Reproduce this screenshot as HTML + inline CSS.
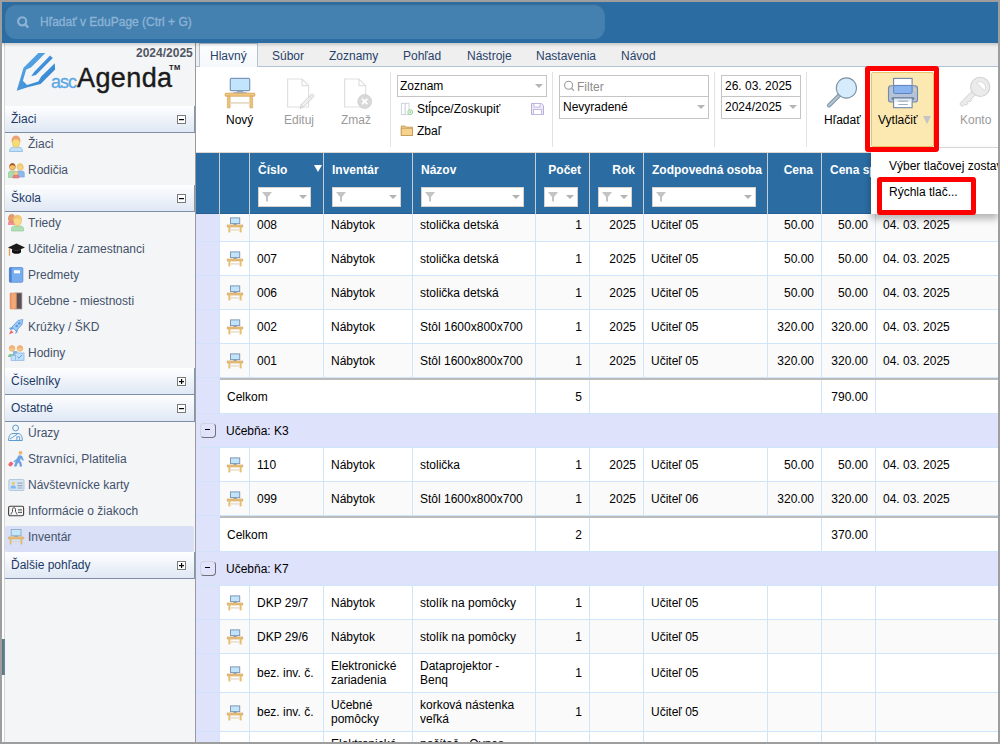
<!DOCTYPE html>
<html><head><meta charset="utf-8">
<style>
*{box-sizing:border-box;margin:0;padding:0}
html,body{width:1000px;height:744px;overflow:hidden;background:#fff}
body{position:relative;font-family:"Liberation Sans",sans-serif;font-size:12px;color:#000}
.a{position:absolute}
.t{position:absolute;white-space:nowrap;line-height:14px}
/* frame */
.fr{position:absolute;background:#9e9e9e;z-index:100}
/* topbar */
#top{left:2px;top:2px;width:996px;height:41px;background:#2b6ca2}
#search{left:5px;top:4px;width:600px;height:35px;border-radius:11px;background:#4480b0;box-shadow:inset 0 1px 1px rgba(0,0,0,.18)}
#topsh{left:2px;top:43px;width:996px;height:4px;background:linear-gradient(rgba(0,0,0,.16),rgba(0,0,0,0));z-index:5}
/* sidebar */
#sb{left:2px;top:43px;width:194px;height:699px;background:#f4f5f7;border-left:2px solid #fff}
#sbl{left:4px;top:43px;width:1px;height:699px;background:#d6d6d6}
#sbr{left:195px;top:43px;width:1px;height:699px;background:#9a9a9a}
.sh{position:absolute;left:5px;width:190px;height:27px;background:linear-gradient(#fefeff,#dfe8f4);border-bottom:1px solid #7d8ea6;border-right:1px solid #8596ad}
.sh span{position:absolute;left:6px;top:6px;line-height:14px;color:#1d3a66;font-size:12px}
.sh i{position:absolute;left:172px;top:9px;width:9px;height:9px;border:1px solid #7a7a7a;background:#fff}
.sh i:before{content:"";position:absolute;left:1px;top:3px;width:5px;height:1px;background:#000;box-shadow:0 .3px 0 #555}
.sh i.p:after{content:"";position:absolute;left:3px;top:1px;width:1px;height:5px;background:#000;box-shadow:.3px 0 0 #555}
.si{position:absolute;left:5px;width:189px;height:26px}
.si span{position:absolute;left:23px;top:4px;line-height:14px;color:#44526b}
.si svg{position:absolute;left:4px;top:4px}
.grpbtn{width:16px;height:15px;border:1px solid #d2d3e2;border-right-color:#707078;border-bottom-color:#707078;border-radius:4px;background:#e0e3fb}
.grpbtn:before{content:"";position:absolute;left:4px;top:5px;width:5px;height:1px;background:#000}
</style></head><body>

<!-- topbar -->
<div id="top" class="a"></div>
<div id="search" class="a"></div>
<div id="topsh" class="a"></div>

<!-- sidebar -->
<div id="sb" class="a"></div>
<div id="sbl" class="a"></div>
<div id="sbr" class="a"></div>
<div class="a" style="left:2px;top:639px;width:3px;height:36px;background:linear-gradient(90deg,#557480,#6a8a97)"></div>


<!-- search content -->
<svg class="a" style="left:16px;top:16px" width="14" height="14" viewBox="0 0 14 14"><circle cx="6.2" cy="5.3" r="4.1" fill="none" stroke="#8db3d4" stroke-width="2.1"/><path d="M9.2 8.4L11.6 10.9" stroke="#8db3d4" stroke-width="2.4" stroke-linecap="round"/></svg>
<div class="t" style="left:40px;top:15px;color:#8cb3d5;-webkit-text-stroke:0.35px #8cb3d5">Hľadať v EduPage (Ctrl + G)</div>

<!-- logo -->
<div class="t" style="left:136px;top:46px;font-weight:bold;color:#505663">2024/2025</div>
<svg class="a" style="left:14px;top:50px" width="44" height="44" viewBox="0 0 44 44">
 <defs><linearGradient id="lg1" x1="0" y1="0" x2="1" y2="1"><stop offset="0" stop-color="#63b2ea"/><stop offset="1" stop-color="#2a7acb"/></linearGradient></defs>
 <path d="M2.7 40.8 L9.5 17.8 L24.3 3 L31.4 3 L17.2 17.2 L12.1 19.8 L8.9 30.8 L13 34.9 L24.3 31.4 L27.2 26.6 L40.8 13.3 L41.1 19.5 L26.6 34 L13.6 37.2 Z" fill="url(#lg1)"/>
 <path d="M17.2 26.3 L20.1 21.9 L36.1 5.6 L38.8 8 L21.9 24.9 Z" fill="#3f8fdc"/>
</svg>
<div class="t" style="left:51px;top:73px;font-size:18px;line-height:18px;letter-spacing:-1px;color:#5aa7e3;-webkit-text-stroke:0.3px #5aa7e3">asc</div>
<div class="t" style="left:77px;top:63px;font-size:27px;line-height:30px;letter-spacing:0.4px;color:#1b1b1b;-webkit-text-stroke:0.4px #1b1b1b">Agenda</div>
<div class="t" style="left:169px;top:64px;font-size:7.5px;line-height:7px;font-weight:bold;color:#1b1b1b;letter-spacing:0.3px">TM</div>

<!-- sidebar sections -->
<div class="sh" style="top:106px"><span>Žiaci</span><i></i></div>
<div class="si" style="top:133px"><span>Žiaci</span></div>
<div class="si" style="top:159px"><span>Rodičia</span></div>
<div class="sh" style="top:185px"><span>Škola</span><i></i></div>
<div class="si" style="top:212px"><span>Triedy</span></div>
<div class="si" style="top:238px"><span>Učitelia / zamestnanci</span></div>
<div class="si" style="top:264px"><span>Predmety</span></div>
<div class="si" style="top:290px"><span>Učebne - miestnosti</span></div>
<div class="si" style="top:316px"><span>Krúžky / ŠKD</span></div>
<div class="si" style="top:342px"><span>Hodiny</span></div>
<div class="sh" style="top:368px"><span>Číselníky</span><i class="p"></i></div>
<div class="sh" style="top:395px"><span>Ostatné</span><i></i></div>
<div class="si" style="top:422px"><span>Úrazy</span></div>
<div class="si" style="top:448px"><span>Stravníci, Platitelia</span></div>
<div class="si" style="top:474px"><span>Návštevnícke karty</span></div>
<div class="si" style="top:500px"><span>Informácie o žiakoch</span></div>
<div class="si" style="top:526px;background:#d8dff6;border-radius:2px"><span>Inventár</span></div>
<div class="sh" style="top:552px"><span>Ďalšie pohľady</span><i class="p"></i></div>

<!-- main -->
<div class="a" style="left:196px;top:208px;width:23px;height:34px;background:#dfe2fb;border-bottom:1px solid #d3e1fb"></div>
<div class="a" style="left:219px;top:208px;width:779px;height:34px;background:#fafafa;border-bottom:1px solid #cfe6fa"></div>
<div class="a" style="left:219px;top:208px;width:1px;height:33px;background:#cfe6fa"></div>
<div class="a" style="left:249px;top:208px;width:1px;height:33px;background:#cfe6fa"></div>
<div class="a" style="left:323px;top:208px;width:1px;height:33px;background:#cfe6fa"></div>
<div class="a" style="left:412px;top:208px;width:1px;height:33px;background:#cfe6fa"></div>
<div class="a" style="left:535px;top:208px;width:1px;height:33px;background:#cfe6fa"></div>
<div class="a" style="left:589px;top:208px;width:1px;height:33px;background:#cfe6fa"></div>
<div class="a" style="left:643px;top:208px;width:1px;height:33px;background:#cfe6fa"></div>
<div class="a" style="left:767px;top:208px;width:1px;height:33px;background:#cfe6fa"></div>
<div class="a" style="left:821px;top:208px;width:1px;height:33px;background:#cfe6fa"></div>
<div class="a" style="left:875px;top:208px;width:1px;height:33px;background:#cfe6fa"></div>
<svg class="a ic" viewBox="0 0 18 16" style="left:226px;top:217px" width="18" height="16"><rect x="4.5" y="0.9" width="9.2" height="5.7" fill="#c2e4fb" stroke="#8098b6" stroke-width="1"/><rect x="7.5" y="6.6" width="3.2" height="1.3" fill="#8098b6"/><rect x="1.2" y="8" width="15.6" height="2" fill="#ecc47c" stroke="#cfa25c" stroke-width=".6"/><rect x="2.4" y="10" width="2" height="5.4" fill="#e8bd6c"/><rect x="13.6" y="10" width="2" height="5.4" fill="#e8bd6c"/><rect x="4.4" y="12" width="9.2" height="1.7" fill="#e9e1d2"/></svg>
<div class="t" style="left:257px;top:217.5px">008</div>
<div class="t" style="left:331px;top:217.5px">Nábytok</div>
<div class="t" style="left:420px;top:217.5px">stolička detská</div>
<div class="t" style="right:418px;top:217.5px;text-align:right">1</div>
<div class="t" style="right:364px;top:217.5px;text-align:right">2025</div>
<div class="t" style="left:651px;top:217.5px">Učiteľ 05</div>
<div class="t" style="right:186px;top:217.5px;text-align:right">50.00</div>
<div class="t" style="right:132px;top:217.5px;text-align:right">50.00</div>
<div class="t" style="left:883px;top:217.5px">04. 03. 2025</div>
<div class="a" style="left:196px;top:242px;width:23px;height:34px;background:#dfe2fb;border-bottom:1px solid #d3e1fb"></div>
<div class="a" style="left:219px;top:242px;width:779px;height:34px;background:#fff;border-bottom:1px solid #cfe6fa"></div>
<div class="a" style="left:219px;top:242px;width:1px;height:33px;background:#cfe6fa"></div>
<div class="a" style="left:249px;top:242px;width:1px;height:33px;background:#cfe6fa"></div>
<div class="a" style="left:323px;top:242px;width:1px;height:33px;background:#cfe6fa"></div>
<div class="a" style="left:412px;top:242px;width:1px;height:33px;background:#cfe6fa"></div>
<div class="a" style="left:535px;top:242px;width:1px;height:33px;background:#cfe6fa"></div>
<div class="a" style="left:589px;top:242px;width:1px;height:33px;background:#cfe6fa"></div>
<div class="a" style="left:643px;top:242px;width:1px;height:33px;background:#cfe6fa"></div>
<div class="a" style="left:767px;top:242px;width:1px;height:33px;background:#cfe6fa"></div>
<div class="a" style="left:821px;top:242px;width:1px;height:33px;background:#cfe6fa"></div>
<div class="a" style="left:875px;top:242px;width:1px;height:33px;background:#cfe6fa"></div>
<svg class="a ic" viewBox="0 0 18 16" style="left:226px;top:251px" width="18" height="16"><rect x="4.5" y="0.9" width="9.2" height="5.7" fill="#c2e4fb" stroke="#8098b6" stroke-width="1"/><rect x="7.5" y="6.6" width="3.2" height="1.3" fill="#8098b6"/><rect x="1.2" y="8" width="15.6" height="2" fill="#ecc47c" stroke="#cfa25c" stroke-width=".6"/><rect x="2.4" y="10" width="2" height="5.4" fill="#e8bd6c"/><rect x="13.6" y="10" width="2" height="5.4" fill="#e8bd6c"/><rect x="4.4" y="12" width="9.2" height="1.7" fill="#e9e1d2"/></svg>
<div class="t" style="left:257px;top:251.5px">007</div>
<div class="t" style="left:331px;top:251.5px">Nábytok</div>
<div class="t" style="left:420px;top:251.5px">stolička detská</div>
<div class="t" style="right:418px;top:251.5px;text-align:right">1</div>
<div class="t" style="right:364px;top:251.5px;text-align:right">2025</div>
<div class="t" style="left:651px;top:251.5px">Učiteľ 05</div>
<div class="t" style="right:186px;top:251.5px;text-align:right">50.00</div>
<div class="t" style="right:132px;top:251.5px;text-align:right">50.00</div>
<div class="t" style="left:883px;top:251.5px">04. 03. 2025</div>
<div class="a" style="left:196px;top:276px;width:23px;height:34px;background:#dfe2fb;border-bottom:1px solid #d3e1fb"></div>
<div class="a" style="left:219px;top:276px;width:779px;height:34px;background:#fafafa;border-bottom:1px solid #cfe6fa"></div>
<div class="a" style="left:219px;top:276px;width:1px;height:33px;background:#cfe6fa"></div>
<div class="a" style="left:249px;top:276px;width:1px;height:33px;background:#cfe6fa"></div>
<div class="a" style="left:323px;top:276px;width:1px;height:33px;background:#cfe6fa"></div>
<div class="a" style="left:412px;top:276px;width:1px;height:33px;background:#cfe6fa"></div>
<div class="a" style="left:535px;top:276px;width:1px;height:33px;background:#cfe6fa"></div>
<div class="a" style="left:589px;top:276px;width:1px;height:33px;background:#cfe6fa"></div>
<div class="a" style="left:643px;top:276px;width:1px;height:33px;background:#cfe6fa"></div>
<div class="a" style="left:767px;top:276px;width:1px;height:33px;background:#cfe6fa"></div>
<div class="a" style="left:821px;top:276px;width:1px;height:33px;background:#cfe6fa"></div>
<div class="a" style="left:875px;top:276px;width:1px;height:33px;background:#cfe6fa"></div>
<svg class="a ic" viewBox="0 0 18 16" style="left:226px;top:285px" width="18" height="16"><rect x="4.5" y="0.9" width="9.2" height="5.7" fill="#c2e4fb" stroke="#8098b6" stroke-width="1"/><rect x="7.5" y="6.6" width="3.2" height="1.3" fill="#8098b6"/><rect x="1.2" y="8" width="15.6" height="2" fill="#ecc47c" stroke="#cfa25c" stroke-width=".6"/><rect x="2.4" y="10" width="2" height="5.4" fill="#e8bd6c"/><rect x="13.6" y="10" width="2" height="5.4" fill="#e8bd6c"/><rect x="4.4" y="12" width="9.2" height="1.7" fill="#e9e1d2"/></svg>
<div class="t" style="left:257px;top:285.5px">006</div>
<div class="t" style="left:331px;top:285.5px">Nábytok</div>
<div class="t" style="left:420px;top:285.5px">stolička detská</div>
<div class="t" style="right:418px;top:285.5px;text-align:right">1</div>
<div class="t" style="right:364px;top:285.5px;text-align:right">2025</div>
<div class="t" style="left:651px;top:285.5px">Učiteľ 05</div>
<div class="t" style="right:186px;top:285.5px;text-align:right">50.00</div>
<div class="t" style="right:132px;top:285.5px;text-align:right">50.00</div>
<div class="t" style="left:883px;top:285.5px">04. 03. 2025</div>
<div class="a" style="left:196px;top:310px;width:23px;height:34px;background:#dfe2fb;border-bottom:1px solid #d3e1fb"></div>
<div class="a" style="left:219px;top:310px;width:779px;height:34px;background:#fff;border-bottom:1px solid #cfe6fa"></div>
<div class="a" style="left:219px;top:310px;width:1px;height:33px;background:#cfe6fa"></div>
<div class="a" style="left:249px;top:310px;width:1px;height:33px;background:#cfe6fa"></div>
<div class="a" style="left:323px;top:310px;width:1px;height:33px;background:#cfe6fa"></div>
<div class="a" style="left:412px;top:310px;width:1px;height:33px;background:#cfe6fa"></div>
<div class="a" style="left:535px;top:310px;width:1px;height:33px;background:#cfe6fa"></div>
<div class="a" style="left:589px;top:310px;width:1px;height:33px;background:#cfe6fa"></div>
<div class="a" style="left:643px;top:310px;width:1px;height:33px;background:#cfe6fa"></div>
<div class="a" style="left:767px;top:310px;width:1px;height:33px;background:#cfe6fa"></div>
<div class="a" style="left:821px;top:310px;width:1px;height:33px;background:#cfe6fa"></div>
<div class="a" style="left:875px;top:310px;width:1px;height:33px;background:#cfe6fa"></div>
<svg class="a ic" viewBox="0 0 18 16" style="left:226px;top:319px" width="18" height="16"><rect x="4.5" y="0.9" width="9.2" height="5.7" fill="#c2e4fb" stroke="#8098b6" stroke-width="1"/><rect x="7.5" y="6.6" width="3.2" height="1.3" fill="#8098b6"/><rect x="1.2" y="8" width="15.6" height="2" fill="#ecc47c" stroke="#cfa25c" stroke-width=".6"/><rect x="2.4" y="10" width="2" height="5.4" fill="#e8bd6c"/><rect x="13.6" y="10" width="2" height="5.4" fill="#e8bd6c"/><rect x="4.4" y="12" width="9.2" height="1.7" fill="#e9e1d2"/></svg>
<div class="t" style="left:257px;top:319.5px">002</div>
<div class="t" style="left:331px;top:319.5px">Nábytok</div>
<div class="t" style="left:420px;top:319.5px">Stôl 1600x800x700</div>
<div class="t" style="right:418px;top:319.5px;text-align:right">1</div>
<div class="t" style="right:364px;top:319.5px;text-align:right">2025</div>
<div class="t" style="left:651px;top:319.5px">Učiteľ 05</div>
<div class="t" style="right:186px;top:319.5px;text-align:right">320.00</div>
<div class="t" style="right:132px;top:319.5px;text-align:right">320.00</div>
<div class="t" style="left:883px;top:319.5px">04. 03. 2025</div>
<div class="a" style="left:196px;top:344px;width:23px;height:34px;background:#dfe2fb;border-bottom:1px solid #d3e1fb"></div>
<div class="a" style="left:219px;top:344px;width:779px;height:34px;background:#fafafa;border-bottom:1px solid #cfe6fa"></div>
<div class="a" style="left:219px;top:344px;width:1px;height:33px;background:#cfe6fa"></div>
<div class="a" style="left:249px;top:344px;width:1px;height:33px;background:#cfe6fa"></div>
<div class="a" style="left:323px;top:344px;width:1px;height:33px;background:#cfe6fa"></div>
<div class="a" style="left:412px;top:344px;width:1px;height:33px;background:#cfe6fa"></div>
<div class="a" style="left:535px;top:344px;width:1px;height:33px;background:#cfe6fa"></div>
<div class="a" style="left:589px;top:344px;width:1px;height:33px;background:#cfe6fa"></div>
<div class="a" style="left:643px;top:344px;width:1px;height:33px;background:#cfe6fa"></div>
<div class="a" style="left:767px;top:344px;width:1px;height:33px;background:#cfe6fa"></div>
<div class="a" style="left:821px;top:344px;width:1px;height:33px;background:#cfe6fa"></div>
<div class="a" style="left:875px;top:344px;width:1px;height:33px;background:#cfe6fa"></div>
<svg class="a ic" viewBox="0 0 18 16" style="left:226px;top:353px" width="18" height="16"><rect x="4.5" y="0.9" width="9.2" height="5.7" fill="#c2e4fb" stroke="#8098b6" stroke-width="1"/><rect x="7.5" y="6.6" width="3.2" height="1.3" fill="#8098b6"/><rect x="1.2" y="8" width="15.6" height="2" fill="#ecc47c" stroke="#cfa25c" stroke-width=".6"/><rect x="2.4" y="10" width="2" height="5.4" fill="#e8bd6c"/><rect x="13.6" y="10" width="2" height="5.4" fill="#e8bd6c"/><rect x="4.4" y="12" width="9.2" height="1.7" fill="#e9e1d2"/></svg>
<div class="t" style="left:257px;top:353.5px">001</div>
<div class="t" style="left:331px;top:353.5px">Nábytok</div>
<div class="t" style="left:420px;top:353.5px">Stôl 1600x800x700</div>
<div class="t" style="right:418px;top:353.5px;text-align:right">1</div>
<div class="t" style="right:364px;top:353.5px;text-align:right">2025</div>
<div class="t" style="left:651px;top:353.5px">Učiteľ 05</div>
<div class="t" style="right:186px;top:353.5px;text-align:right">320.00</div>
<div class="t" style="right:132px;top:353.5px;text-align:right">320.00</div>
<div class="t" style="left:883px;top:353.5px">04. 03. 2025</div>
<div class="a" style="left:220px;top:378px;width:778px;height:2px;background:#bbb"></div>
<div class="a" style="left:196px;top:378px;width:23px;height:36px;background:#dfe2fb;border-bottom:1px solid #d3e1fb"></div>
<div class="a" style="left:219px;top:380px;width:779px;height:34px;background:#fff;border-bottom:1px solid #cfe6fa"></div>
<div class="a" style="left:219px;top:378px;width:1px;height:35px;background:#cfe6fa"></div>
<div class="a" style="left:535px;top:380px;width:1px;height:33px;background:#cfe6fa"></div>
<div class="a" style="left:589px;top:380px;width:1px;height:33px;background:#cfe6fa"></div>
<div class="a" style="left:821px;top:380px;width:1px;height:33px;background:#cfe6fa"></div>
<div class="a" style="left:875px;top:380px;width:1px;height:33px;background:#cfe6fa"></div>
<div class="t" style="left:227px;top:389.5px">Celkom</div>
<div class="t" style="right:418px;top:389.5px">5</div>
<div class="t" style="right:132px;top:389.5px">790.00</div>
<div class="a" style="left:196px;top:414px;width:802px;height:34px;background:#dfe2fb;border-bottom:1px solid #cfe6fa"></div>
<div class="a grpbtn" style="left:200px;top:423px"></div>
<div class="t" style="left:226px;top:423.5px">Učebňa: K3</div>
<div class="a" style="left:196px;top:448px;width:23px;height:34px;background:#dfe2fb;border-bottom:1px solid #d3e1fb"></div>
<div class="a" style="left:219px;top:448px;width:779px;height:34px;background:#fff;border-bottom:1px solid #cfe6fa"></div>
<div class="a" style="left:219px;top:448px;width:1px;height:33px;background:#cfe6fa"></div>
<div class="a" style="left:249px;top:448px;width:1px;height:33px;background:#cfe6fa"></div>
<div class="a" style="left:323px;top:448px;width:1px;height:33px;background:#cfe6fa"></div>
<div class="a" style="left:412px;top:448px;width:1px;height:33px;background:#cfe6fa"></div>
<div class="a" style="left:535px;top:448px;width:1px;height:33px;background:#cfe6fa"></div>
<div class="a" style="left:589px;top:448px;width:1px;height:33px;background:#cfe6fa"></div>
<div class="a" style="left:643px;top:448px;width:1px;height:33px;background:#cfe6fa"></div>
<div class="a" style="left:767px;top:448px;width:1px;height:33px;background:#cfe6fa"></div>
<div class="a" style="left:821px;top:448px;width:1px;height:33px;background:#cfe6fa"></div>
<div class="a" style="left:875px;top:448px;width:1px;height:33px;background:#cfe6fa"></div>
<svg class="a ic" viewBox="0 0 18 16" style="left:226px;top:457px" width="18" height="16"><rect x="4.5" y="0.9" width="9.2" height="5.7" fill="#c2e4fb" stroke="#8098b6" stroke-width="1"/><rect x="7.5" y="6.6" width="3.2" height="1.3" fill="#8098b6"/><rect x="1.2" y="8" width="15.6" height="2" fill="#ecc47c" stroke="#cfa25c" stroke-width=".6"/><rect x="2.4" y="10" width="2" height="5.4" fill="#e8bd6c"/><rect x="13.6" y="10" width="2" height="5.4" fill="#e8bd6c"/><rect x="4.4" y="12" width="9.2" height="1.7" fill="#e9e1d2"/></svg>
<div class="t" style="left:257px;top:457.5px">110</div>
<div class="t" style="left:331px;top:457.5px">Nábytok</div>
<div class="t" style="left:420px;top:457.5px">stolička</div>
<div class="t" style="right:418px;top:457.5px;text-align:right">1</div>
<div class="t" style="right:364px;top:457.5px;text-align:right">2025</div>
<div class="t" style="left:651px;top:457.5px">Učiteľ 05</div>
<div class="t" style="right:186px;top:457.5px;text-align:right">50.00</div>
<div class="t" style="right:132px;top:457.5px;text-align:right">50.00</div>
<div class="t" style="left:883px;top:457.5px">04. 03. 2025</div>
<div class="a" style="left:196px;top:482px;width:23px;height:34px;background:#dfe2fb;border-bottom:1px solid #d3e1fb"></div>
<div class="a" style="left:219px;top:482px;width:779px;height:34px;background:#fafafa;border-bottom:1px solid #cfe6fa"></div>
<div class="a" style="left:219px;top:482px;width:1px;height:33px;background:#cfe6fa"></div>
<div class="a" style="left:249px;top:482px;width:1px;height:33px;background:#cfe6fa"></div>
<div class="a" style="left:323px;top:482px;width:1px;height:33px;background:#cfe6fa"></div>
<div class="a" style="left:412px;top:482px;width:1px;height:33px;background:#cfe6fa"></div>
<div class="a" style="left:535px;top:482px;width:1px;height:33px;background:#cfe6fa"></div>
<div class="a" style="left:589px;top:482px;width:1px;height:33px;background:#cfe6fa"></div>
<div class="a" style="left:643px;top:482px;width:1px;height:33px;background:#cfe6fa"></div>
<div class="a" style="left:767px;top:482px;width:1px;height:33px;background:#cfe6fa"></div>
<div class="a" style="left:821px;top:482px;width:1px;height:33px;background:#cfe6fa"></div>
<div class="a" style="left:875px;top:482px;width:1px;height:33px;background:#cfe6fa"></div>
<svg class="a ic" viewBox="0 0 18 16" style="left:226px;top:491px" width="18" height="16"><rect x="4.5" y="0.9" width="9.2" height="5.7" fill="#c2e4fb" stroke="#8098b6" stroke-width="1"/><rect x="7.5" y="6.6" width="3.2" height="1.3" fill="#8098b6"/><rect x="1.2" y="8" width="15.6" height="2" fill="#ecc47c" stroke="#cfa25c" stroke-width=".6"/><rect x="2.4" y="10" width="2" height="5.4" fill="#e8bd6c"/><rect x="13.6" y="10" width="2" height="5.4" fill="#e8bd6c"/><rect x="4.4" y="12" width="9.2" height="1.7" fill="#e9e1d2"/></svg>
<div class="t" style="left:257px;top:491.5px">099</div>
<div class="t" style="left:331px;top:491.5px">Nábytok</div>
<div class="t" style="left:420px;top:491.5px">Stôl 1600x800x700</div>
<div class="t" style="right:418px;top:491.5px;text-align:right">1</div>
<div class="t" style="right:364px;top:491.5px;text-align:right">2025</div>
<div class="t" style="left:651px;top:491.5px">Učiteľ 06</div>
<div class="t" style="right:186px;top:491.5px;text-align:right">320.00</div>
<div class="t" style="right:132px;top:491.5px;text-align:right">320.00</div>
<div class="t" style="left:883px;top:491.5px">04. 03. 2025</div>
<div class="a" style="left:220px;top:516px;width:778px;height:2px;background:#bbb"></div>
<div class="a" style="left:196px;top:516px;width:23px;height:36px;background:#dfe2fb;border-bottom:1px solid #d3e1fb"></div>
<div class="a" style="left:219px;top:518px;width:779px;height:34px;background:#fff;border-bottom:1px solid #cfe6fa"></div>
<div class="a" style="left:219px;top:516px;width:1px;height:35px;background:#cfe6fa"></div>
<div class="a" style="left:535px;top:518px;width:1px;height:33px;background:#cfe6fa"></div>
<div class="a" style="left:589px;top:518px;width:1px;height:33px;background:#cfe6fa"></div>
<div class="a" style="left:821px;top:518px;width:1px;height:33px;background:#cfe6fa"></div>
<div class="a" style="left:875px;top:518px;width:1px;height:33px;background:#cfe6fa"></div>
<div class="t" style="left:227px;top:527.5px">Celkom</div>
<div class="t" style="right:418px;top:527.5px">2</div>
<div class="t" style="right:132px;top:527.5px">370.00</div>
<div class="a" style="left:196px;top:552px;width:802px;height:34px;background:#dfe2fb;border-bottom:1px solid #cfe6fa"></div>
<div class="a grpbtn" style="left:200px;top:561px"></div>
<div class="t" style="left:226px;top:561.5px">Učebňa: K7</div>
<div class="a" style="left:196px;top:586px;width:23px;height:34px;background:#dfe2fb;border-bottom:1px solid #d3e1fb"></div>
<div class="a" style="left:219px;top:586px;width:779px;height:34px;background:#fff;border-bottom:1px solid #cfe6fa"></div>
<div class="a" style="left:219px;top:586px;width:1px;height:33px;background:#cfe6fa"></div>
<div class="a" style="left:249px;top:586px;width:1px;height:33px;background:#cfe6fa"></div>
<div class="a" style="left:323px;top:586px;width:1px;height:33px;background:#cfe6fa"></div>
<div class="a" style="left:412px;top:586px;width:1px;height:33px;background:#cfe6fa"></div>
<div class="a" style="left:535px;top:586px;width:1px;height:33px;background:#cfe6fa"></div>
<div class="a" style="left:589px;top:586px;width:1px;height:33px;background:#cfe6fa"></div>
<div class="a" style="left:643px;top:586px;width:1px;height:33px;background:#cfe6fa"></div>
<div class="a" style="left:767px;top:586px;width:1px;height:33px;background:#cfe6fa"></div>
<div class="a" style="left:821px;top:586px;width:1px;height:33px;background:#cfe6fa"></div>
<div class="a" style="left:875px;top:586px;width:1px;height:33px;background:#cfe6fa"></div>
<svg class="a ic" viewBox="0 0 18 16" style="left:226px;top:595px" width="18" height="16"><rect x="4.5" y="0.9" width="9.2" height="5.7" fill="#c2e4fb" stroke="#8098b6" stroke-width="1"/><rect x="7.5" y="6.6" width="3.2" height="1.3" fill="#8098b6"/><rect x="1.2" y="8" width="15.6" height="2" fill="#ecc47c" stroke="#cfa25c" stroke-width=".6"/><rect x="2.4" y="10" width="2" height="5.4" fill="#e8bd6c"/><rect x="13.6" y="10" width="2" height="5.4" fill="#e8bd6c"/><rect x="4.4" y="12" width="9.2" height="1.7" fill="#e9e1d2"/></svg>
<div class="t" style="left:257px;top:595.5px">DKP 29/7</div>
<div class="t" style="left:331px;top:595.5px">Nábytok</div>
<div class="t" style="left:420px;top:595.5px">stolík na pomôcky</div>
<div class="t" style="right:418px;top:595.5px;text-align:right">1</div>
<div class="t" style="left:651px;top:595.5px">Učiteľ 05</div>
<div class="a" style="left:196px;top:620px;width:23px;height:34px;background:#dfe2fb;border-bottom:1px solid #d3e1fb"></div>
<div class="a" style="left:219px;top:620px;width:779px;height:34px;background:#fafafa;border-bottom:1px solid #cfe6fa"></div>
<div class="a" style="left:219px;top:620px;width:1px;height:33px;background:#cfe6fa"></div>
<div class="a" style="left:249px;top:620px;width:1px;height:33px;background:#cfe6fa"></div>
<div class="a" style="left:323px;top:620px;width:1px;height:33px;background:#cfe6fa"></div>
<div class="a" style="left:412px;top:620px;width:1px;height:33px;background:#cfe6fa"></div>
<div class="a" style="left:535px;top:620px;width:1px;height:33px;background:#cfe6fa"></div>
<div class="a" style="left:589px;top:620px;width:1px;height:33px;background:#cfe6fa"></div>
<div class="a" style="left:643px;top:620px;width:1px;height:33px;background:#cfe6fa"></div>
<div class="a" style="left:767px;top:620px;width:1px;height:33px;background:#cfe6fa"></div>
<div class="a" style="left:821px;top:620px;width:1px;height:33px;background:#cfe6fa"></div>
<div class="a" style="left:875px;top:620px;width:1px;height:33px;background:#cfe6fa"></div>
<svg class="a ic" viewBox="0 0 18 16" style="left:226px;top:629px" width="18" height="16"><rect x="4.5" y="0.9" width="9.2" height="5.7" fill="#c2e4fb" stroke="#8098b6" stroke-width="1"/><rect x="7.5" y="6.6" width="3.2" height="1.3" fill="#8098b6"/><rect x="1.2" y="8" width="15.6" height="2" fill="#ecc47c" stroke="#cfa25c" stroke-width=".6"/><rect x="2.4" y="10" width="2" height="5.4" fill="#e8bd6c"/><rect x="13.6" y="10" width="2" height="5.4" fill="#e8bd6c"/><rect x="4.4" y="12" width="9.2" height="1.7" fill="#e9e1d2"/></svg>
<div class="t" style="left:257px;top:629.5px">DKP 29/6</div>
<div class="t" style="left:331px;top:629.5px">Nábytok</div>
<div class="t" style="left:420px;top:629.5px">stolík na pomôcky</div>
<div class="t" style="right:418px;top:629.5px;text-align:right">1</div>
<div class="t" style="left:651px;top:629.5px">Učiteľ 05</div>
<div class="a" style="left:196px;top:654px;width:23px;height:39px;background:#dfe2fb;border-bottom:1px solid #d3e1fb"></div>
<div class="a" style="left:219px;top:654px;width:779px;height:39px;background:#fff;border-bottom:1px solid #cfe6fa"></div>
<div class="a" style="left:219px;top:654px;width:1px;height:38px;background:#cfe6fa"></div>
<div class="a" style="left:249px;top:654px;width:1px;height:38px;background:#cfe6fa"></div>
<div class="a" style="left:323px;top:654px;width:1px;height:38px;background:#cfe6fa"></div>
<div class="a" style="left:412px;top:654px;width:1px;height:38px;background:#cfe6fa"></div>
<div class="a" style="left:535px;top:654px;width:1px;height:38px;background:#cfe6fa"></div>
<div class="a" style="left:589px;top:654px;width:1px;height:38px;background:#cfe6fa"></div>
<div class="a" style="left:643px;top:654px;width:1px;height:38px;background:#cfe6fa"></div>
<div class="a" style="left:767px;top:654px;width:1px;height:38px;background:#cfe6fa"></div>
<div class="a" style="left:821px;top:654px;width:1px;height:38px;background:#cfe6fa"></div>
<div class="a" style="left:875px;top:654px;width:1px;height:38px;background:#cfe6fa"></div>
<svg class="a ic" viewBox="0 0 18 16" style="left:226px;top:666px" width="18" height="16"><rect x="4.5" y="0.9" width="9.2" height="5.7" fill="#c2e4fb" stroke="#8098b6" stroke-width="1"/><rect x="7.5" y="6.6" width="3.2" height="1.3" fill="#8098b6"/><rect x="1.2" y="8" width="15.6" height="2" fill="#ecc47c" stroke="#cfa25c" stroke-width=".6"/><rect x="2.4" y="10" width="2" height="5.4" fill="#e8bd6c"/><rect x="13.6" y="10" width="2" height="5.4" fill="#e8bd6c"/><rect x="4.4" y="12" width="9.2" height="1.7" fill="#e9e1d2"/></svg>
<div class="t" style="left:257px;top:666.0px">bez. inv. č.</div>
<div class="t" style="left:331px;top:659.0px">Elektronické<br>zariadenia</div>
<div class="t" style="left:420px;top:659.0px">Dataprojektor -<br>Benq</div>
<div class="t" style="right:418px;top:666.0px;text-align:right">1</div>
<div class="t" style="left:651px;top:666.0px">Učiteľ 05</div>
<div class="a" style="left:196px;top:693px;width:23px;height:39px;background:#dfe2fb;border-bottom:1px solid #d3e1fb"></div>
<div class="a" style="left:219px;top:693px;width:779px;height:39px;background:#fafafa;border-bottom:1px solid #cfe6fa"></div>
<div class="a" style="left:219px;top:693px;width:1px;height:38px;background:#cfe6fa"></div>
<div class="a" style="left:249px;top:693px;width:1px;height:38px;background:#cfe6fa"></div>
<div class="a" style="left:323px;top:693px;width:1px;height:38px;background:#cfe6fa"></div>
<div class="a" style="left:412px;top:693px;width:1px;height:38px;background:#cfe6fa"></div>
<div class="a" style="left:535px;top:693px;width:1px;height:38px;background:#cfe6fa"></div>
<div class="a" style="left:589px;top:693px;width:1px;height:38px;background:#cfe6fa"></div>
<div class="a" style="left:643px;top:693px;width:1px;height:38px;background:#cfe6fa"></div>
<div class="a" style="left:767px;top:693px;width:1px;height:38px;background:#cfe6fa"></div>
<div class="a" style="left:821px;top:693px;width:1px;height:38px;background:#cfe6fa"></div>
<div class="a" style="left:875px;top:693px;width:1px;height:38px;background:#cfe6fa"></div>
<svg class="a ic" viewBox="0 0 18 16" style="left:226px;top:705px" width="18" height="16"><rect x="4.5" y="0.9" width="9.2" height="5.7" fill="#c2e4fb" stroke="#8098b6" stroke-width="1"/><rect x="7.5" y="6.6" width="3.2" height="1.3" fill="#8098b6"/><rect x="1.2" y="8" width="15.6" height="2" fill="#ecc47c" stroke="#cfa25c" stroke-width=".6"/><rect x="2.4" y="10" width="2" height="5.4" fill="#e8bd6c"/><rect x="13.6" y="10" width="2" height="5.4" fill="#e8bd6c"/><rect x="4.4" y="12" width="9.2" height="1.7" fill="#e9e1d2"/></svg>
<div class="t" style="left:257px;top:705.0px">bez. inv. č.</div>
<div class="t" style="left:331px;top:698.0px">Učebné<br>pomôcky</div>
<div class="t" style="left:420px;top:698.0px">korková nástenka<br>veľká</div>
<div class="t" style="right:418px;top:705.0px;text-align:right">1</div>
<div class="t" style="left:651px;top:705.0px">Učiteľ 05</div>
<div class="a" style="left:196px;top:732px;width:23px;height:39px;background:#dfe2fb;border-bottom:1px solid #d3e1fb"></div>
<div class="a" style="left:219px;top:732px;width:779px;height:39px;background:#fff;border-bottom:1px solid #cfe6fa"></div>
<div class="a" style="left:219px;top:732px;width:1px;height:38px;background:#cfe6fa"></div>
<div class="a" style="left:249px;top:732px;width:1px;height:38px;background:#cfe6fa"></div>
<div class="a" style="left:323px;top:732px;width:1px;height:38px;background:#cfe6fa"></div>
<div class="a" style="left:412px;top:732px;width:1px;height:38px;background:#cfe6fa"></div>
<div class="a" style="left:535px;top:732px;width:1px;height:38px;background:#cfe6fa"></div>
<div class="a" style="left:589px;top:732px;width:1px;height:38px;background:#cfe6fa"></div>
<div class="a" style="left:643px;top:732px;width:1px;height:38px;background:#cfe6fa"></div>
<div class="a" style="left:767px;top:732px;width:1px;height:38px;background:#cfe6fa"></div>
<div class="a" style="left:821px;top:732px;width:1px;height:38px;background:#cfe6fa"></div>
<div class="a" style="left:875px;top:732px;width:1px;height:38px;background:#cfe6fa"></div>
<svg class="a ic" viewBox="0 0 18 16" style="left:226px;top:744px" width="18" height="16"><rect x="4.5" y="0.9" width="9.2" height="5.7" fill="#c2e4fb" stroke="#8098b6" stroke-width="1"/><rect x="7.5" y="6.6" width="3.2" height="1.3" fill="#8098b6"/><rect x="1.2" y="8" width="15.6" height="2" fill="#ecc47c" stroke="#cfa25c" stroke-width=".6"/><rect x="2.4" y="10" width="2" height="5.4" fill="#e8bd6c"/><rect x="13.6" y="10" width="2" height="5.4" fill="#e8bd6c"/><rect x="4.4" y="12" width="9.2" height="1.7" fill="#e9e1d2"/></svg>
<div class="t" style="left:331px;top:737.0px">Elektronické<br>zariadenia</div>
<div class="t" style="left:420px;top:737.0px">počítač - Ovnes<br>x</div>
<div class="t" style="right:418px;top:744.0px;text-align:right">1</div>
<div class="t" style="left:651px;top:744.0px">Učiteľ 05</div>
<div class="a" style="left:196px;top:43px;width:802px;height:24px;background:#efefef;border-bottom:1px solid #b3c3d6"></div>
<div class="a" style="left:199px;top:43px;width:59px;height:24px;background:linear-gradient(#fdfeff,#f5f8fc);border:1px solid #b3c3d6;border-bottom:none"></div>
<div class="t" style="left:210px;top:49px;color:#28426a">Hlavný</div>
<div class="t" style="left:272px;top:49px;color:#28426a">Súbor</div>
<div class="t" style="left:329px;top:49px;color:#28426a">Zoznamy</div>
<div class="t" style="left:403px;top:49px;color:#28426a">Pohľad</div>
<div class="t" style="left:467px;top:49px;color:#28426a">Nástroje</div>
<div class="t" style="left:536px;top:49px;color:#28426a">Nastavenia</div>
<div class="t" style="left:621px;top:49px;color:#28426a">Návod</div>
<div class="a" style="left:196px;top:67px;width:802px;height:86px;background:#fff;border-bottom:1px solid #ddd8d4"></div>
<div class="a" style="left:390px;top:72px;width:1px;height:75px;background:#e2e2e2"></div>
<div class="a" style="left:552px;top:72px;width:1px;height:75px;background:#e2e2e2"></div>
<div class="a" style="left:714px;top:72px;width:1px;height:75px;background:#e2e2e2"></div>
<div class="a" style="left:806px;top:72px;width:1px;height:75px;background:#e2e2e2"></div>
<div class="t" style="left:226px;top:113px;color:#000">Nový</div>
<div class="t" style="left:284px;top:113px;color:#9a9a9a">Edituj</div>
<div class="t" style="left:341px;top:113px;color:#9a9a9a">Zmaž</div>
<div class="t" style="left:824px;top:113px;color:#000">Hľadať</div>
<div class="t" style="left:960px;top:113px;color:#9a9a9a">Konto</div>
<div class="a" style="left:397px;top:75px;width:150px;height:22px;border:1px solid #c4c4c4;background:#fff;"></div>
<div class="t" style="left:400px;top:79px">Zoznam</div>
<div class="a" style="left:535px;top:84px;width:0;height:0;border-left:4px solid transparent;border-right:4px solid transparent;border-top:4px solid #b5b5b5"></div>
<div class="t" style="left:417px;top:102px">Stĺpce/Zoskupiť</div>
<div class="t" style="left:417px;top:124px">Zbaľ</div>
<div class="a" style="left:559px;top:75px;width:150px;height:22px;border:1px solid #c4c4c4;background:#fff;"></div>
<div class="a" style="left:559px;top:96px;width:150px;height:23px;border:1px solid #c4c4c4;background:#fff;"></div>
<div class="t" style="left:577px;top:80px;color:#8c8c8c">Filter</div>
<div class="t" style="left:563px;top:100px">Nevyradené</div>
<div class="a" style="left:697px;top:105px;width:0;height:0;border-left:4px solid transparent;border-right:4px solid transparent;border-top:4px solid #b5b5b5"></div>
<div class="a" style="left:721px;top:75px;width:80px;height:22px;border:1px solid #c4c4c4;background:#fff;"></div>
<div class="a" style="left:721px;top:96px;width:80px;height:23px;border:1px solid #c4c4c4;background:#fff;"></div>
<div class="t" style="left:725px;top:79px">26. 03. 2025</div>
<div class="t" style="left:725px;top:100px">2024/2025</div>
<div class="a" style="left:789px;top:105px;width:0;height:0;border-left:4px solid transparent;border-right:4px solid transparent;border-top:4px solid #b5b5b5"></div>
<div class="a" style="left:196px;top:153px;width:802px;height:61px;background:#2b6ca2;border-bottom:1px solid #235f95"></div>
<div class="a" style="left:219px;top:153px;width:1px;height:61px;background:#c7cdd3"></div>
<div class="a" style="left:249px;top:153px;width:1px;height:61px;background:#c7cdd3"></div>
<div class="a" style="left:323px;top:153px;width:1px;height:61px;background:#c7cdd3"></div>
<div class="a" style="left:412px;top:153px;width:1px;height:61px;background:#c7cdd3"></div>
<div class="a" style="left:535px;top:153px;width:1px;height:61px;background:#c7cdd3"></div>
<div class="a" style="left:589px;top:153px;width:1px;height:61px;background:#c7cdd3"></div>
<div class="a" style="left:643px;top:153px;width:1px;height:61px;background:#c7cdd3"></div>
<div class="a" style="left:767px;top:153px;width:1px;height:61px;background:#c7cdd3"></div>
<div class="a" style="left:821px;top:153px;width:1px;height:61px;background:#c7cdd3"></div>
<div class="a" style="left:875px;top:153px;width:1px;height:61px;background:#c7cdd3"></div>
<div class="t" style="left:258px;top:163px;color:#fff;font-weight:bold">Číslo</div>
<div class="a" style="left:258px;top:187px;width:53px;height:20px;background:#fff;border:1px solid #d9d2cc"></div>
<svg class="a" style="left:261px;top:190px" width="12" height="14" viewBox="0 0 12 14"><path d="M1 2H11L7 7V12L5 11V7Z" fill="#c4c4c4"/></svg>
<div class="a" style="left:299px;top:195px;width:0;height:0;border-left:4px solid transparent;border-right:4px solid transparent;border-top:4px solid #b3b3b3"></div>
<div class="t" style="left:332px;top:163px;color:#fff;font-weight:bold">Inventár</div>
<div class="a" style="left:332px;top:187px;width:69px;height:20px;background:#fff;border:1px solid #d9d2cc"></div>
<svg class="a" style="left:335px;top:190px" width="12" height="14" viewBox="0 0 12 14"><path d="M1 2H11L7 7V12L5 11V7Z" fill="#c4c4c4"/></svg>
<div class="a" style="left:389px;top:195px;width:0;height:0;border-left:4px solid transparent;border-right:4px solid transparent;border-top:4px solid #b3b3b3"></div>
<div class="t" style="left:421px;top:163px;color:#fff;font-weight:bold">Názov</div>
<div class="a" style="left:421px;top:187px;width:103px;height:20px;background:#fff;border:1px solid #d9d2cc"></div>
<svg class="a" style="left:424px;top:190px" width="12" height="14" viewBox="0 0 12 14"><path d="M1 2H11L7 7V12L5 11V7Z" fill="#c4c4c4"/></svg>
<div class="a" style="left:512px;top:195px;width:0;height:0;border-left:4px solid transparent;border-right:4px solid transparent;border-top:4px solid #b3b3b3"></div>
<div class="t" style="right:419px;top:163px;color:#fff;font-weight:bold">Počet</div>
<div class="a" style="left:544px;top:187px;width:34px;height:20px;background:#fff;border:1px solid #d9d2cc"></div>
<svg class="a" style="left:547px;top:190px" width="12" height="14" viewBox="0 0 12 14"><path d="M1 2H11L7 7V12L5 11V7Z" fill="#c4c4c4"/></svg>
<div class="a" style="left:566px;top:195px;width:0;height:0;border-left:4px solid transparent;border-right:4px solid transparent;border-top:4px solid #b3b3b3"></div>
<div class="t" style="right:365px;top:163px;color:#fff;font-weight:bold">Rok</div>
<div class="a" style="left:598px;top:187px;width:34px;height:20px;background:#fff;border:1px solid #d9d2cc"></div>
<svg class="a" style="left:601px;top:190px" width="12" height="14" viewBox="0 0 12 14"><path d="M1 2H11L7 7V12L5 11V7Z" fill="#c4c4c4"/></svg>
<div class="a" style="left:620px;top:195px;width:0;height:0;border-left:4px solid transparent;border-right:4px solid transparent;border-top:4px solid #b3b3b3"></div>
<div class="t" style="left:652px;top:163px;color:#fff;font-weight:bold">Zodpovedná osoba</div>
<div class="a" style="left:652px;top:187px;width:104px;height:20px;background:#fff;border:1px solid #d9d2cc"></div>
<svg class="a" style="left:655px;top:190px" width="12" height="14" viewBox="0 0 12 14"><path d="M1 2H11L7 7V12L5 11V7Z" fill="#c4c4c4"/></svg>
<div class="a" style="left:744px;top:195px;width:0;height:0;border-left:4px solid transparent;border-right:4px solid transparent;border-top:4px solid #b3b3b3"></div>
<div class="t" style="right:187px;top:163px;color:#fff;font-weight:bold">Cena</div>
<div class="t" style="left:830px;top:163px;color:#fff;font-weight:bold">Cena spolu</div>
<div class="a" style="left:314px;top:165px;width:0;height:0;border-left:4px solid transparent;border-right:4px solid transparent;border-top:7px solid #fff"></div>
<!-- /main -->
<!-- icons -->
<svg class="a" style="left:8px;top:133px;" width="17" height="20" viewBox="0 0 17 20"><path d="M1.5 18.5C1.5 15 3.5 14 6 14H10C12.5 14 14.5 15 14.5 18.5Z" fill="#bfe1fb" stroke="#8ab8e0" stroke-width=".8"/>
<path d="M4.3 8.5C4.3 5 5.5 3.2 8 3.2S11.7 5 11.7 8.5C11.7 12 10 14.5 8 14.5S4.3 12 4.3 8.5Z" fill="#f7db74" stroke="#e4bd55" stroke-width=".7"/>
<path d="M4 8.5C3.8 4.5 5.5 3 8 3S12.2 4.5 12 8.5C11 6.5 10 6 8 6S5 6.5 4 8.5Z" fill="#f2a47c" stroke="#e08e63" stroke-width=".5"/></svg>
<svg class="a" style="left:8px;top:159px;" width="17" height="20" viewBox="0 0 17 20"><path d="M0.3 18.5V14.5C0.3 13 1.5 12 3 12H6C7.5 12 8.5 13 8.5 14.5V18.5Z" fill="#a8dcae" stroke="#88c290" stroke-width=".6"/>
<path d="M8.3 18V14.5C8.3 13 9.5 12 11 12H14C15.5 12 16.3 13 16.3 14.5V18Z" fill="#8cbaf0" stroke="#6d9ede" stroke-width=".6"/>
<circle cx="4.4" cy="8" r="3" fill="#f3c26a" stroke="#c98a3f" stroke-width=".6"/><path d="M1.4 8C1.4 5 3 4 4.4 4S7.4 5 7.4 8C6.5 6.5 5.5 6.3 4.4 6.3S2.3 6.5 1.4 8Z" fill="#a85a2a"/>
<circle cx="12.2" cy="8.3" r="3" fill="#f6d487" stroke="#e2b860" stroke-width=".6"/><path d="M9 10C8.8 6 10 4.3 12.2 4.3S15.6 6 15.4 10L14.5 9C14.5 7 13.5 6.5 12.2 6.5S10 7 10 9Z" fill="#f1c66e"/>
<path d="M5 19V17.5C5 16.5 5.8 16 7 16H9C10.2 16 11 16.5 11 17.5V19Z" fill="#f07d86" stroke="#d8606a" stroke-width=".5"/><circle cx="8" cy="14.2" r="1.9" fill="#f6cf86" stroke="#dcae5c" stroke-width=".5"/></svg>
<svg class="a" style="left:8px;top:212px;" width="17" height="20" viewBox="0 0 17 20"><path d="M-0.5 13V11.5C-0.5 10 .8 9 2.5 9H6C7.5 9 8 10 8 11.5V13Z" fill="#f58f9b"/>
<path d="M0.5 7C0.5 3.5 2 2.5 3.8 2.5S7 3.5 7 7C7 9 5.5 10 3.8 10S0.5 9 0.5 7Z" fill="#e89d6e" stroke="#c97a48" stroke-width=".6"/>
<path d="M3.5 19V16.5C3.5 15 5 14 7 14H12C14 14 15.5 15 15.5 16.5V19Z" fill="#aee0b3" stroke="#8ec596" stroke-width=".6"/>
<path d="M5.5 8.5C5.5 5 7 3.5 9.5 3.5S13.5 5 13.5 8.5C13.5 11.5 11.5 14 9.5 14S5.5 11.5 5.5 8.5Z" fill="#f8d88a" stroke="#e3b65e" stroke-width=".6"/>
<path d="M5.3 9C5 4.5 7 3.2 9.5 3.2S14 4.5 13.7 9C13 7 12 6.2 9.5 6.2S6 7 5.3 9Z" fill="#f1c573"/></svg>
<svg class="a" style="left:8px;top:238px;" width="17" height="20" viewBox="0 0 17 20"><path d="M0 9.5L8.5 5.5L17 9.5L8.5 13Z" fill="#1a1a1a"/><path d="M4 11V14C4 15 6 15.8 8.5 15.8S13 15 13 14V11L8.5 13Z" fill="#111"/>
<path d="M1.5 10V16.5" stroke="#e0a060" stroke-width="1.3"/><circle cx="1.5" cy="16.8" r=".9" fill="#e69a5a"/></svg>
<svg class="a" style="left:8px;top:264px;" width="17" height="20" viewBox="0 0 17 20"><rect x="1.4" y="3.6" width="13.4" height="14.6" rx="1" fill="#78aef0" stroke="#4f86d2" stroke-width=".8"/><rect x="1.4" y="3.6" width="2.3" height="14.6" fill="#4a82cf"/>
<rect x="6" y="6.3" width="6" height="3" fill="#fff"/></svg>
<svg class="a" style="left:8px;top:290px;" width="17" height="20" viewBox="0 0 17 20"><rect x="8" y="3" width="5.8" height="15.9" fill="#5a4f55" stroke="#8b7d80" stroke-width=".8"/><path d="M2.2 3.2L8.3 3V19L2.2 18.8Z" fill="#f3a878" stroke="#d58756" stroke-width=".7"/><rect x="2.2" y="3" width="1.3" height="15.8" fill="#e6925e"/></svg>
<svg class="a" style="left:8px;top:316px;" width="17" height="20" viewBox="0 0 17 20"><path d="M14.8 3.5L10 4.5L4 11L8 15L14 8.5Z" fill="#9fccf5" stroke="#5f98dc" stroke-width=".8"/>
<path d="M4 11L1 12L2.5 14L6 13Z" fill="#6fa3e3"/><path d="M8 15L7 18L9.3 16.5L10 13Z" fill="#6fa3e3"/>
<circle cx="11.3" cy="7.3" r="1.3" fill="#5f98dc"/><circle cx="8.7" cy="10" r="1.3" fill="#5f98dc"/>
<path d="M3 14L1 18.5L5.5 16.5Z" fill="#ef6470"/></svg>
<svg class="a" style="left:8px;top:342px;" width="17" height="20" viewBox="0 0 17 20"><path d="M0 14.5C0 13 1 12 2.5 12H6V15H0Z" fill="#86c98d"/><circle cx="4" cy="6.5" r="2.8" fill="#f4cd7f" stroke="#e0a062" stroke-width=".6"/><path d="M1.2 6.5C1.2 4 2.5 3.5 4 3.5S6.8 4 6.8 6.5" fill="#f3b07a"/>
<circle cx="12" cy="6.5" r="2.8" fill="#f4cd7f" stroke="#e0a062" stroke-width=".6"/><path d="M9.2 6.5C9.2 4 10.5 3.5 12 3.5S14.8 4 14.8 6.5" fill="#f3b07a"/>
<rect x="5" y="9" width="4.5" height="4" rx="1" fill="#8fb3dc"/>
<rect x="7" y="11" width="9" height="7.3" fill="#bfe1fb" stroke="#7eaee0" stroke-width=".7"/><path d="M9.3 14.6L11 16.2L14 12.8" fill="none" stroke="#5f98dc" stroke-width=".9"/>
<rect x="3" y="13.5" width="4.5" height="5" fill="#bfe1fb" stroke="#7eaee0" stroke-width=".6"/></svg>
<svg class="a" style="left:8px;top:422px;" width="17" height="20" viewBox="0 0 17 20"><circle cx="7.6" cy="6" r="2.9" fill="none" stroke="#5a9ad6" stroke-width="1"/>
<path d="M0.6 18.5C0.6 14 2.3 11.5 5 11.5H10C12.7 11.5 14.3 14 14.3 18.5Z" fill="none" stroke="#5a9ad6" stroke-width="1"/>
<path d="M2 17L9.5 12M8.8 18.3V14.8H11.6V18.3" fill="none" stroke="#5a9ad6" stroke-width=".9"/></svg>
<svg class="a" style="left:8px;top:448px;" width="17" height="20" viewBox="0 0 17 20"><circle cx="12.5" cy="4.8" r="1.6" fill="#f0b86a" stroke="#d89a4a" stroke-width=".4"/>
<path d="M10.8 7.5L8.3 12L6.3 18.3H8.3L10 14L11.8 16L11.8 18.3H13.8L13.3 15L11.8 12.5L12.8 10L14.8 12.5L15.5 12L13.8 8Z" fill="#6ca3e6" stroke="#5a8fd6" stroke-width=".4"/>
<path d="M8.8 11.5L5.8 14" stroke="#6ca3e6" stroke-width="1.2"/>
<rect x="1" y="13.8" width="3.6" height="4.6" rx="1.2" transform="rotate(40 2.8 16)" fill="#ef6478"/></svg>
<svg class="a" style="left:8px;top:474px;" width="17" height="20" viewBox="0 0 17 20"><rect x="0.8" y="5.5" width="15.2" height="11" rx="1.2" fill="#d3e4f5" stroke="#a9bfd6" stroke-width=".8"/>
<circle cx="5.3" cy="9.3" r="1.6" fill="#f5c867"/><path d="M2.5 14.5C2.5 12 3.8 11.5 5.3 11.5S8 12 8 14.5Z" fill="#82b7ee"/>
<rect x="9.5" y="8.5" width="5" height="1.2" fill="#9aa7b5"/><rect x="9.5" y="11" width="5" height="1.2" fill="#9aa7b5"/><rect x="9.5" y="13.5" width="5" height="1" fill="#9aa7b5"/></svg>
<svg class="a" style="left:8px;top:500px;" width="17" height="20" viewBox="0 0 17 20"><rect x="0.6" y="6.2" width="15" height="9.6" rx="1.5" fill="#f6f6f6" stroke="#404040" stroke-width="1.1"/>
<path d="M3 14.5C3.3 12.5 4.5 12.3 4.5 11.5V9.5C4.5 8 5.2 7.8 6 7.8S7.5 8 7.5 9.5V11.5C7.5 12.3 8.7 12.5 9 14.5" fill="none" stroke="#444" stroke-width="1"/>
<rect x="10" y="9.3" width="4" height="1.1" fill="#555"/><rect x="10" y="11.8" width="4" height="1.1" fill="#555"/></svg>
<svg class="a" style="left:8px;top:526px;" width="17" height="20" viewBox="0 0 17 20"><rect x="3.2" y="3.4" width="9.8" height="6.4" fill="#c3e6fb" stroke="#8aa2bd" stroke-width=".8"/><rect x="6.3" y="9.8" width="3.6" height="1" fill="#8aa2bd"/>
<rect x="0.3" y="10.9" width="15.5" height="2" rx=".4" fill="#eac27a" stroke="#d3a35a" stroke-width=".5"/>
<rect x="1.7" y="12.8" width="1.8" height="5.6" fill="#e4ba69"/><rect x="12.5" y="12.8" width="1.8" height="5.6" fill="#e4ba69"/><rect x="3.5" y="14.8" width="9" height="1.6" fill="#d9d6dc"/></svg>
<svg class="a" style="left:222px;top:74px;" width="36" height="36" viewBox="0 0 36 36"><rect x="8.3" y="4.3" width="19.4" height="12.4" rx="1" fill="#c3e5fb" stroke="#7d98b8" stroke-width="1.2"/>
<rect x="15" y="16.8" width="6" height="1.5" fill="#8ba6c4"/><rect x="11.5" y="18.3" width="13" height="1" fill="#8ba6c4"/>
<rect x="3.2" y="19.2" width="29.6" height="3" rx=".6" fill="#f1c77f" stroke="#cf9f55" stroke-width=".8"/>
<rect x="5.4" y="22" width="2.7" height="12" rx=".5" fill="#efc47a" stroke="#cfa055" stroke-width=".6"/><rect x="27.9" y="22" width="2.7" height="12" rx=".5" fill="#efc47a" stroke="#cfa055" stroke-width=".6"/>
<rect x="8.1" y="28" width="19.8" height="1.8" fill="#e7dcc8"/></svg>
<svg class="a" style="left:284px;top:74px;" width="34" height="36" viewBox="0 0 34 36"><path d="M3.6 5H18L24.6 11.6V33H3.6Z" fill="#fff" stroke="#e0e0e0" stroke-width="1.2"/><path d="M18 5V11.6H24.6" fill="none" stroke="#e0e0e0" stroke-width="1.2"/>
<path d="M16.2 34.5L17.2 30.5L26.8 20.9C27.6 20.1 28.7 20.1 29.3 20.7S29.9 22.4 29.1 23.2L19.5 32.8Z" fill="#f0f0f0" stroke="#cfcfcf" stroke-width="1"/><path d="M17.2 30.5L19.5 32.8M25.5 22.2L27.8 24.5" stroke="#cfcfcf" stroke-width=".8"/></svg>
<svg class="a" style="left:341px;top:74px;" width="34" height="36" viewBox="0 0 34 36"><path d="M3.6 5H18L24.6 11.6V33H3.6Z" fill="#fff" stroke="#e0e0e0" stroke-width="1.2"/><path d="M18 5V11.6H24.6" fill="none" stroke="#e0e0e0" stroke-width="1.2"/>
<circle cx="23.7" cy="27.5" r="6.9" fill="#d9d9d9" stroke="#cdcdcd" stroke-width=".8"/><path d="M21 24.8L26.4 30.2M26.4 24.8L21 30.2" stroke="#fff" stroke-width="1.8"/></svg>
<svg class="a" style="left:400px;top:102px;" width="15" height="14" viewBox="0 0 15 14"><rect x="1.4" y="1.3" width="3.8" height="11.3" fill="#fff" stroke="#c9d0da" stroke-width=".9"/><rect x="5.2" y="1.3" width="3.8" height="11.3" fill="#fff" stroke="#c9d0da" stroke-width=".9"/>
<circle cx="10.2" cy="10.1" r="2.4" fill="#fff" stroke="#8fd08f" stroke-width="1"/><path d="M9 10.1H11.4M10.2 8.9V11.3" stroke="#8fd08f" stroke-width=".8"/></svg>
<svg class="a" style="left:530px;top:102px;" width="15" height="14" viewBox="0 0 15 14"><path d="M1.5 1.5H11.5L13.5 3.5V12.5H1.5Z" fill="#eeeaf8" stroke="#b8b0dc" stroke-width="1"/><rect x="4" y="1.5" width="6" height="3.5" fill="#fff" stroke="#b8b0dc" stroke-width=".8"/><rect x="3.5" y="7.5" width="8" height="5" fill="#fff" stroke="#b8b0dc" stroke-width=".8"/></svg>
<svg class="a" style="left:400px;top:124px;" width="15" height="14" viewBox="0 0 15 14"><path d="M1.3 2H5L6.2 3.2H12.5V11.5H1.3Z" fill="#f5d08a" stroke="#c49b58" stroke-width=".9"/><rect x="1.3" y="4.2" width="11.2" height="7.3" fill="#f7d28c" stroke="#c49b58" stroke-width=".9"/></svg>
<svg class="a" style="left:562px;top:78px;" width="14" height="14" viewBox="0 0 14 14"><circle cx="6.6" cy="7.3" r="4" fill="none" stroke="#9b9b9b" stroke-width="1.1"/><path d="M9.5 10.2L11.9 12.6" stroke="#9b9b9b" stroke-width="1.3"/></svg>
<svg class="a" style="left:824px;top:74px;" width="34" height="36" viewBox="0 0 34 36"><path d="M16 20.5L5 31.5" stroke="#7f93a6" stroke-width="4" stroke-linecap="round"/><path d="M16 20.5L5 31.5" stroke="#b3c6d4" stroke-width="2" stroke-linecap="round"/><circle cx="22.4" cy="14" r="10.1" fill="#d6ecfc" stroke="#7f92a5" stroke-width="1.1"/></svg>
<svg class="a" style="left:886px;top:76px;z-index:20" width="34" height="34" viewBox="0 0 34 34"><rect x="7.6" y="2.4" width="18.5" height="9" fill="#fff" stroke="#6f86a8" stroke-width="1.1"/>
<rect x="2.5" y="9.8" width="29" height="16.2" rx="2.6" fill="#b4c3d8" stroke="#7689a6" stroke-width="1.1"/>
<rect x="7.6" y="9.4" width="18.5" height="8.1" rx="1.6" fill="#8ab4ef" stroke="#5f83bb" stroke-width="1"/>
<circle cx="29" cy="13.7" r=".9" fill="#f5d66a"/>
<rect x="5.4" y="21.2" width="23" height="2.8" rx="1.4" fill="#6f7f99"/>
<rect x="7.6" y="22.2" width="18.5" height="9.5" fill="#fff" stroke="#6f86a8" stroke-width="1.1"/>
<rect x="8.2" y="22.7" width="17.3" height="3" fill="#dfe8f0"/>
<rect x="12.2" y="24.6" width="9.8" height="1.2" rx=".6" fill="#9fb0c2"/><rect x="12.2" y="27.9" width="9.8" height="1.1" rx=".5" fill="#9fb0c2"/></svg>
<svg class="a" style="left:955px;top:74px;" width="36" height="36" viewBox="0 0 36 36"><path d="M18.8 15.5L5.8 28.5C5 29.3 5 30.7 5.8 31.5C6.6 32.3 8 32.3 8.8 31.5L10 30.3L11.3 31.2L12.8 29.6L12.3 28.3L13.3 27.3L14.8 28L16.3 26.5L15.8 25.2L22.5 19Z" fill="#ebebeb" stroke="#d3d3d3" stroke-width="1"/>
<circle cx="25.2" cy="12.9" r="9.6" fill="#ebebeb" stroke="#d3d3d3" stroke-width="1.1"/><path d="M21.6 8.8A5.6 5.6 0 0 1 29.4 16.6Z" fill="#fff" stroke="#d8d8d8" stroke-width=".9"/></svg>
<!-- /icons -->
<!-- overlay -->
<div class="a" style="left:871px;top:147px;width:127px;height:67px;background:#fff;border-top:1px solid #d6d6d6;box-shadow:0 5px 7px rgba(0,0,0,.28)"></div>
<div class="t" style="left:889px;top:159px">Výber tlačovej zostavy</div>
<div class="t" style="left:889px;top:185px">Rýchla tlač...</div>
<div class="a" style="left:877px;top:177px;width:99px;height:38px;border:5px solid #ff0000;border-radius:3px"></div>
<div class="a" style="left:871px;top:72px;width:63px;height:75px;background:#fce9b2;border:1px solid #e9c46a;border-radius:2px"></div>
<div class="t" style="left:878px;top:113px">Vytlačiť</div>
<div class="a" style="left:923px;top:116px;width:0;height:0;border-left:4.5px solid transparent;border-right:4.5px solid transparent;border-top:8px solid #c4c4c6"></div>
<div class="a" style="left:865px;top:66px;width:74px;height:86px;border:5px solid #ff0000;border-radius:3px"></div>
<!-- /overlay -->
<!-- frame -->
<div class="fr" style="left:0;top:0;width:1000px;height:2px"></div>
<div class="fr" style="left:0;top:742px;width:1000px;height:2px"></div>
<div class="fr" style="left:0;top:0;width:2px;height:744px"></div>
<div class="fr" style="left:998px;top:0;width:2px;height:744px"></div>
</body></html>
